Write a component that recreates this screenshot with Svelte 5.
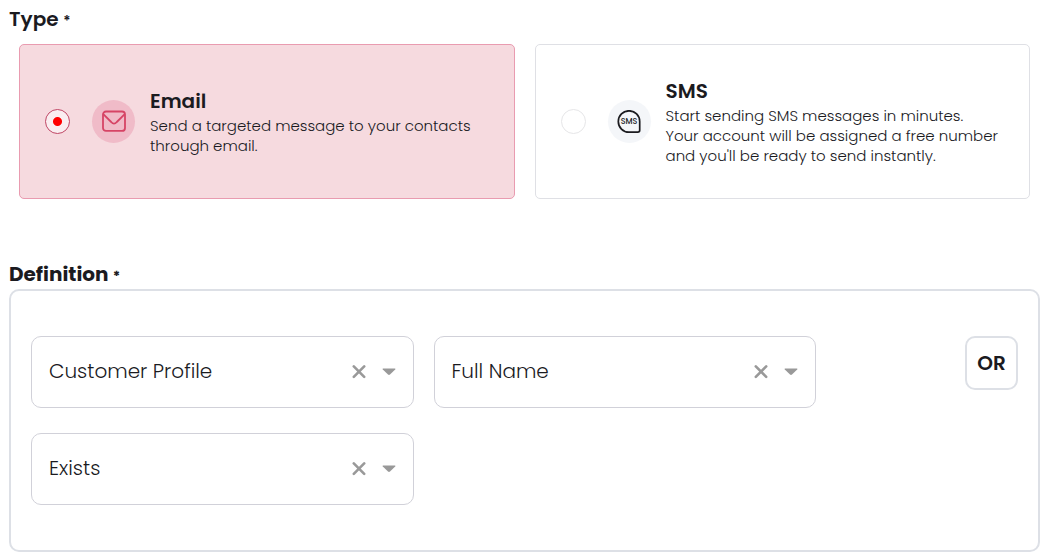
<script>
  let channel = $state('email');

  const channels = [
    {
      id: 'email',
      title: 'Email',
      text: 'Send a targeted message to your contacts through email.'
    },
    {
      id: 'sms',
      title: 'SMS',
      text: "Start sending SMS messages in minutes.\nYour account will be assigned a free number and you'll be ready to send instantly."
    }
  ];

  let fields = $state([
    { id: 'source', label: 'Source', value: 'Customer Profile' },
    { id: 'attribute', label: 'Attribute', value: 'Full Name' },
    { id: 'condition', label: 'Condition', value: 'Exists' }
  ]);
</script>

<main>
  <fieldset>
    <legend>Type <span class="star">*</span></legend>
    <div class="cards">
      {#each channels as c (c.id)}
        <label class="card" class:selected={channel === c.id}>
          <input type="radio" name="channel" value={c.id} bind:group={channel} />
          <span class="badge">
            {#if c.id === 'email'}
              <svg width="26" height="24" viewBox="0 0 26 24" fill="none" stroke="#d64465" stroke-width="1.8" stroke-linecap="round" stroke-linejoin="round" aria-hidden="true">
                <rect x="2" y="1.5" width="22" height="19.4" rx="3" />
                <path d="M2.8 4.7 L10.2 12 Q13 15.4 15.8 12 L23.2 4.7" />
              </svg>
            {:else}
              <svg width="24" height="24" viewBox="0 0 24 24" fill="none" aria-hidden="true">
                <path d="M12 .8 A10.6 10.6 0 0 1 22.7 11.5 V20.3 Q22.7 22.2 20.8 22.2 H12 A10.7 10.7 0 0 1 12 .8 Z" stroke="#1b1b1f" stroke-width="1.7" />
                <text x="12" y="14" text-anchor="middle" font-family="Poppins, Inter, sans-serif" font-size="8" font-weight="500" fill="#1b1b1f">SMS</text>
              </svg>
            {/if}
          </span>
          <span class="copy">
            <span class="title">{c.title}</span>
            <span class="text">{c.text}</span>
          </span>
        </label>
      {/each}
    </div>
  </fieldset>

  <section>
    <h2>Definition <span class="star">*</span></h2>
    <div class="panel">
      <div class="fields">
        {#each fields as f (f.id)}
          <div class="field">
            <select aria-label={f.label} bind:value={f.value}>
              <option value=""></option>
              <option value={f.value}>{f.value}</option>
            </select>
            <button class="clear" type="button" aria-label="Clear" onclick={() => (f.value = '')}>
              <svg width="14" height="14" viewBox="0 0 14 14" stroke="#999" stroke-width="2.6" stroke-linecap="round" aria-hidden="true">
                <path d="M1.8 1.4 L12.2 11.8 M12.2 1.4 L1.8 11.8" />
              </svg>
            </button>
            <svg class="arrow" width="14" height="8" viewBox="0 0 14 8" fill="#999" aria-hidden="true">
              <path d="M1 .5 H13 Q14 .8 13.2 1.6 L8 6.6 Q7 7.4 6 6.6 L.8 1.6 Q0 .8 1 .5 Z" />
            </svg>
          </div>
        {/each}
      </div>
      <button class="or" type="button">OR</button>
    </div>
  </section>
</main>

<style>
  :global(body) {
    margin: 0;
    background: #fff;
  }

  main {
    padding: 4px 8px 5px 9px;
    font-family: Poppins, Inter, sans-serif;
    color: #1b1b1f;
  }

  main * {
    box-sizing: border-box;
  }

  fieldset {
    min-width: 0;
    margin: 0 0 60px;
    padding: 0;
    border: 0;
  }

  legend,
  h2 {
    margin: 0;
    padding: 0;
    font-size: 20px;
    line-height: 30px;
    font-weight: 700;
  }

  legend {
    font-weight: 600;
  }

  .star {
    font-size: 14px;
    line-height: 14px;
  }

  .cards {
    display: grid;
    grid-template-columns: 1fr 1fr;
    gap: 20px;
    padding: 10px 10px 0;
  }

  .card {
    display: flex;
    align-items: center;
    min-height: 155px;
    padding: 16px 25px;
    border: 1px solid #dfe0e5;
    border-radius: 5px;
    cursor: pointer;
  }

  .card.selected {
    background: #f6dadf;
    border-color: #e99bb0;
  }

  input {
    flex: none;
    appearance: none;
    width: 25px;
    height: 25px;
    margin: 0 22px 0 0;
    border: 1px solid #e6e6e8;
    border-radius: 50%;
    background: #fff;
  }

  input:checked {
    border-color: #c04766;
    background: radial-gradient(circle, #f00 4px, #faedf0 5px);
  }

  .badge {
    display: flex;
    flex: none;
    align-items: center;
    justify-content: center;
    width: 43px;
    height: 43px;
    margin-right: 15px;
    border-radius: 50%;
    background: #f4f6f9;
  }

  .selected .badge {
    background: #f0bbc8;
  }

  .copy {
    display: flex;
    flex-direction: column;
    padding-bottom: 2px;
  }

  .title {
    font-size: 20px;
    line-height: 30px;
    font-weight: 600;
  }

  .text {
    font-size: 15px;
    line-height: 20px;
    font-weight: 300;
    white-space: pre-line;
  }

  .panel {
    display: grid;
    grid-template-columns: minmax(0, 1fr) auto;
    align-items: start;
    column-gap: 149px;
    padding: 45px 20px;
    border: 2px solid #dde0e6;
    border-radius: 10px;
  }

  .fields {
    display: grid;
    grid-template-columns: 1fr 1fr;
    gap: 25px 20px;
  }

  .field {
    position: relative;
  }

  select {
    display: block;
    appearance: none;
    width: 100%;
    height: 72px;
    padding: 0 72px 2px 17px;
    border: 1px solid #d1d1d9;
    border-radius: 10px;
    background: #fff;
    color: inherit;
    font-family: inherit;
    font-size: 20px;
    font-weight: 300;
  }

  .clear {
    position: absolute;
    top: 26px;
    right: 45px;
    display: flex;
    padding: 3px;
    border: 0;
    background: none;
    cursor: pointer;
  }

  .arrow {
    position: absolute;
    top: 32px;
    right: 18px;
    pointer-events: none;
  }

  .or {
    width: 53px;
    height: 54px;
    padding: 0;
    border: 2px solid #dde0e6;
    border-radius: 10px;
    background: #fff;
    color: inherit;
    font-family: inherit;
    font-size: 20px;
    font-weight: 600;
    cursor: pointer;
  }
</style>
